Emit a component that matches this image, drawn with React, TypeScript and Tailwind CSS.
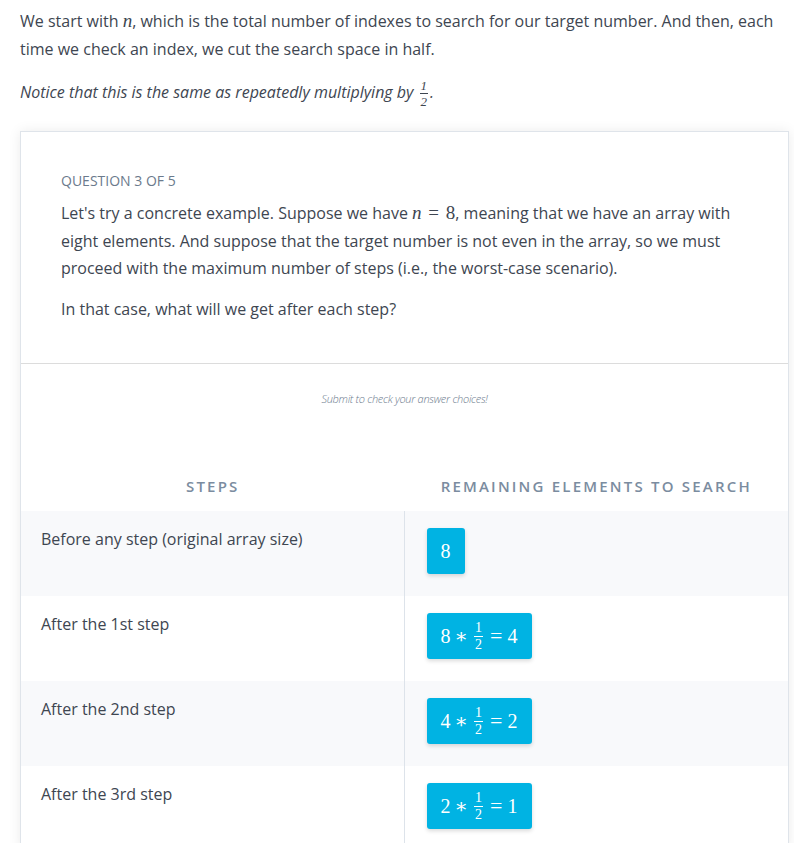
import React from "react";

const mathFont = { fontFamily: '"Liberation Serif", "DejaVu Serif", serif' };

const Frac = ({ small = false }: { small?: boolean }) => (
  <span
    className={`inline-flex flex-col items-center align-middle mx-[2px] leading-none ${
      small ? "text-[13px]" : "text-[14px]"
    }`}
    style={mathFont}
  >
    <span className="px-[1px] pb-[1px]">1</span>
    <span className="w-full border-t border-current" />
    <span className="px-[1px] pt-[1px]">2</span>
  </span>
);

const rows = [
  { label: "Before any step (original array size)", expr: null, value: "8" },
  { label: "After the 1st step", expr: "8", value: "4" },
  { label: "After the 2nd step", expr: "4", value: "2" },
  { label: "After the 3rd step", expr: "2", value: "1" },
];

const Chip = ({ expr, value }: { expr: string | null; value: string }) => (
  <div
    className="inline-flex items-center h-[46px] px-[14px] rounded-[3px] bg-[#00b3e3] text-white text-[20px] shadow-[0_2px_4px_rgba(0,0,0,0.15)]"
    style={mathFont}
  >
    {expr === null ? (
      <span>{value}</span>
    ) : (
      <>
        <span>{expr}</span>
        <span className="mx-[4px]">∗</span>
        <Frac />
        <span className="mx-[5px] text-[22px] leading-none">=</span>
        <span>{value}</span>
      </>
    )}
  </div>
);

const App = () => {
  return (
    <div
      className="w-[794px] min-h-[843px] bg-white text-[#3e4651] pt-[8px] overflow-hidden"
      style={{ fontFamily: '"Open Sans", "Noto Sans", sans-serif' }}
    >
      <div className="px-[20px]">
        <p className="text-[16px] leading-[27.5px]">
          We start with{" "}
          <span className="italic text-[19px] leading-none" style={mathFont}>
            n
          </span>
          , which is the total number of indexes to search for our target number. And then, each time we check an
          index, we cut the search space in half.
        </p>
        <p className="mt-[16px] text-[16px] leading-[27.5px] italic">
          Notice that this is the same as repeatedly multiplying by <Frac small />.
        </p>
      </div>

      <div className="ml-[20px] mr-[5px] mt-[23px] bg-white border border-[#dfe4ea] shadow-[0_0_12px_rgba(0,0,0,0.08)]">
        <div className="px-[40px] pt-[39px] pb-[40px]">
          <div className="text-[14px] leading-[20px] text-[#6b7a8c] uppercase">Question 3 of 5</div>
          <p className="mt-[9px] text-[16px] leading-[27.5px]">
            Let's try a concrete example. Suppose we have{" "}
            <span className="text-[19px] leading-none" style={mathFont}>
              <span className="italic">n</span> <span className="mx-[2px]">=</span> 8
            </span>
            , meaning that we have an array with eight elements. And suppose that the target number is not even in
            the array, so we must proceed with the maximum number of steps (i.e., the worst-case scenario).
          </p>
          <p className="mt-[13px] text-[16px] leading-[27.5px]">In that case, what will we get after each step?</p>
        </div>

        <div className="border-t border-[#dcdcdc]">
          <div className="pt-[28px] text-center text-[11px] leading-[14px] italic font-light text-[#6b7a8c] tracking-[-0.3px]">
            Submit to check your answer choices!
          </div>
          <div className="grid grid-cols-2 mt-[70px] text-[15px] font-semibold tracking-[2.2px] text-[#7b8ca0] leading-[20px]">
            <div className="text-center">STEPS</div>
            <div className="text-center">REMAINING ELEMENTS TO SEARCH</div>
          </div>
          <div className="mt-[15px]">
            {rows.map((row, i) => (
              <div key={i} className={`grid grid-cols-2 h-[85px] ${i % 2 === 0 ? "bg-[#f8f9fb]" : "bg-white"}`}>
                <div className="pl-[20px] pt-[17px] text-[16px] leading-[22px] border-r border-[#dde3ea]">
                  {row.label}
                </div>
                <div className="pl-[22px] pt-[17px]">
                  <Chip expr={row.expr} value={row.value} />
                </div>
              </div>
            ))}
          </div>
        </div>
      </div>
    </div>
  );
};

export default App;
